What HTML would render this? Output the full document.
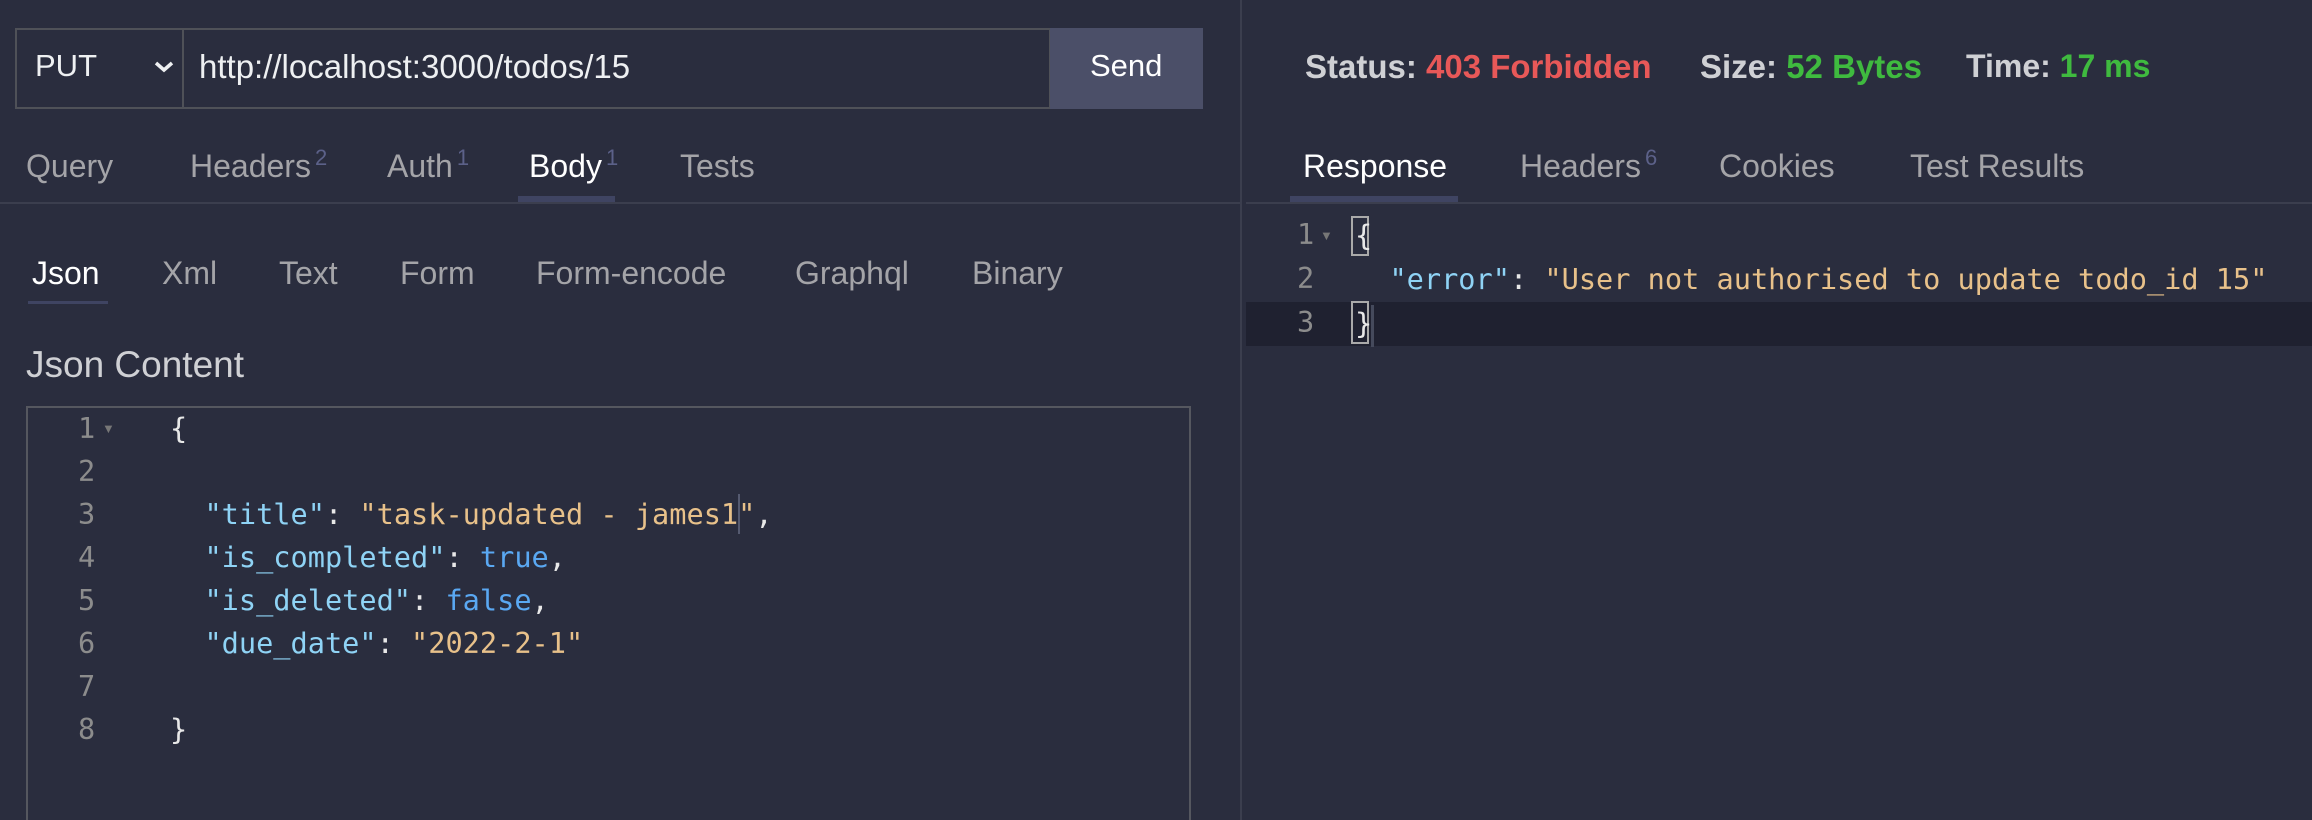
<!DOCTYPE html>
<html><head><meta charset="utf-8"><style>
*{margin:0;padding:0;box-sizing:border-box}
html{overflow:hidden;width:2312px;height:820px}
body{width:2312px;height:820px;background:#2a2d3e;position:relative;overflow:hidden;font-family:"Liberation Sans",sans-serif;}
.a{position:absolute;white-space:pre}
.tab{font-size:32px;color:#a4a4a8;line-height:36px}
.sup{font-size:22px;color:#5c6189;vertical-align:top;position:relative;top:-8px;margin-left:4px}
.mono{font-family:"DejaVu Sans Mono","Liberation Mono",monospace;font-size:28.6px;line-height:43px;color:#e8e8e8}
.ln{color:#8c8c8c}
.k{color:#8fd3f5}.s{color:#e8c18a}.b{color:#5aa8f2}
.tri{font-size:13px;color:#777;position:absolute}
</style></head><body>
<div class="a" style="left:1240px;top:0;width:2px;height:820px;background:#3b3e4e"></div>
<div class="a" style="left:15px;top:28px;width:1036px;height:81px;border:2px solid #4f5158"></div>
<div class="a" style="left:182px;top:28px;width:2px;height:81px;background:#4f5158"></div>
<div class="a" style="left:35px;top:48px;font-size:31px;color:#eef0f2">PUT</div>
<svg class="a" style="left:153px;top:59px" width="22" height="16" viewBox="0 0 22 16"><path d="M3 4 L11 11 L19 4" stroke="#eef0f2" stroke-width="3.5" fill="none"/></svg>
<div class="a" style="left:199px;top:48px;font-size:33px;color:#eef0f2">http://localhost:3000/todos/15</div>
<div class="a" style="left:1050px;top:28px;width:153px;height:81px;background:#4b4f68"></div>
<div class="a" style="left:1090px;top:48px;font-size:31px;color:#fff">Send</div>

<div class="a tab" style="left:26px;top:148px">Query</div>
<div class="a tab" style="left:190px;top:148px">Headers<span class="sup">2</span></div>
<div class="a tab" style="left:387px;top:148px">Auth<span class="sup">1</span></div>
<div class="a tab" style="left:529px;top:148px;color:#fff">Body<span class="sup">1</span></div>
<div class="a tab" style="left:680px;top:148px">Tests</div>
<div class="a" style="left:518px;top:196px;width:97px;height:6px;background:#3f4462"></div>
<div class="a" style="left:0;top:202px;width:1240px;height:2px;background:#3b3e4e"></div>

<div class="a tab" style="left:32px;top:255px;color:#fff">Json</div>
<div class="a tab" style="left:162px;top:255px">Xml</div>
<div class="a tab" style="left:279px;top:255px">Text</div>
<div class="a tab" style="left:400px;top:255px">Form</div>
<div class="a tab" style="left:536px;top:255px">Form-encode</div>
<div class="a tab" style="left:795px;top:255px">Graphql</div>
<div class="a tab" style="left:972px;top:255px">Binary</div>
<div class="a" style="left:28px;top:301px;width:80px;height:3px;background:#3f4462"></div>

<div class="a" style="left:26px;top:344px;font-size:37px;color:#cfd0d4;line-height:42px">Json Content</div>
<div class="a" style="left:26px;top:406px;width:1165px;height:414px;border:2px solid #55575f;border-bottom:none"></div>

<div class="a mono ln" style="left:78px;top:407px">1
2
3
4
5
6
7
8</div>
<div class="tri" style="left:102px;top:421px">▼</div>
<div class="a mono" style="left:170px;top:407px">{

  <span class="k">"title"</span>: <span class="s">"task-updated - james1"</span>,
  <span class="k">"is_completed"</span>: <span class="b">true</span>,
  <span class="k">"is_deleted"</span>: <span class="b">false</span>,
  <span class="k">"due_date"</span>: <span class="s">"2022-2-1"</span>

}</div>
<div class="a" style="left:738px;top:494px;width:2px;height:40px;background:#555a70"></div>

<div class="a" style="left:1305px;top:48px;font-size:33px;font-weight:bold;color:#cfd0d4">Status: <span style="color:#e85858">403 Forbidden</span></div>
<div class="a" style="left:1700px;top:48px;font-size:33px;font-weight:bold;color:#cfd0d4">Size: <span style="color:#3fba3f">52 Bytes</span></div>
<div class="a" style="left:1966px;top:48px;font-size:32px;font-weight:bold;color:#cfd0d4">Time: <span style="color:#3fba3f">17 ms</span></div>

<div class="a tab" style="left:1303px;top:148px;color:#fff">Response</div>
<div class="a tab" style="left:1520px;top:148px">Headers<span class="sup">6</span></div>
<div class="a tab" style="left:1719px;top:148px">Cookies</div>
<div class="a tab" style="left:1910px;top:148px">Test Results</div>
<div class="a" style="left:1290px;top:196px;width:168px;height:6px;background:#3f4462"></div>
<div class="a" style="left:1246px;top:202px;width:1066px;height:2px;background:#3b3e4e"></div>

<div class="a" style="left:1246px;top:302px;width:1066px;height:44px;background:#1f2130"></div>
<div class="a" style="left:1351px;top:216px;width:18px;height:40px;border:2px solid #aaa"></div>
<div class="a" style="left:1351px;top:301px;width:18px;height:43px;border:2px solid #aaa"></div>
<div class="a" style="left:1371px;top:305px;width:3px;height:42px;background:#454a5c"></div>
<div class="a mono ln" style="left:1297px;top:212px;line-height:44px">1
2
3</div>
<div class="tri" style="left:1320px;top:228px">▼</div>
<div class="a mono" style="left:1355px;top:213px;line-height:44px">{
  <span class="k">"error"</span>: <span class="s">"User not authorised to update todo_id 15"</span>
}</div>
</body></html>
